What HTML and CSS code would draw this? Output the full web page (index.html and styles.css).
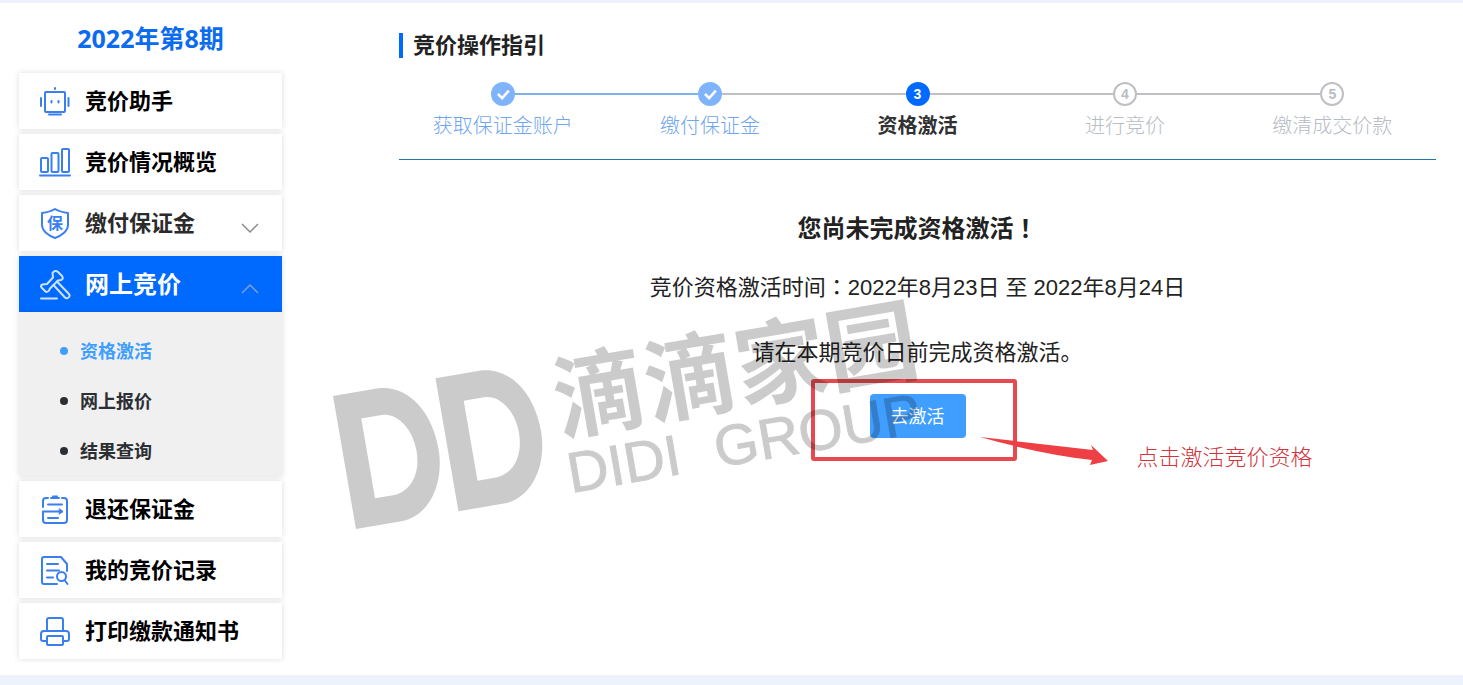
FILE: index.html
```html
<!DOCTYPE html>
<html lang="zh-CN">
<head>
	<meta charset="UTF-8">
	<title>网上竞价</title>
	<link rel="stylesheet" href="styles.css">
</head>
<body>
<div class="page">
	<aside class="sidebar">
		<h1>2022年第8期</h1>
		<nav class="menu">
			<a class="item" href="#">
				<svg class="icon" viewBox="0 0 32 32"><rect x="6" y="7" width="20" height="20" rx="1"/><path d="M10 29.500H22M2 13V21M29.500 13V21M16 3V4M12.500 16V17.500M19.500 16V17.500"/></svg>
				<span>竞价助手</span>
			</a>
			<a class="item" href="#">
				<svg class="icon" viewBox="0 0 32 32"><rect x="2" y="12" width="7" height="14" rx="1"/><rect x="12.500" y="7" width="7" height="19" rx="1"/><rect x="23" y="3" width="7" height="23" rx="1"/><path d="M1 29.500H31"/></svg>
				<span>竞价情况概览</span>
			</a>
			<button type="button" class="item parent">
				<svg class="icon" viewBox="0 0 32 32"><path d="M16 2Q21 5 29 6V18C29 24 22 29 16 31C10 29 3 24 3 18V6Q11 5 16 2Z"/><text x="16" y="22" class="shield_text">保</text></svg>
				<span>缴付保证金</span>
				<svg class="arrow" viewBox="0 0 20 32"><path d="M2 17L10 25L18 17"/></svg>
			</button>
			<button type="button" class="item parent active">
				<svg class="icon" viewBox="0 0 32 32"><path d="M13.500 5Q16 1.500 19 4L23 8Q25 11 22 12L19 12.500L11 20.500L10 22.500Q8 25 6 23L2.500 19.500Q1 17.500 3.500 16.500L8 16L14 9.500Z"/><path d="M14.500 17L25.500 29Q28 31.500 30 29Q31.500 27 29 25L18 13.500M2 30.500H18"/></svg>
				<span>网上竞价</span>
				<svg class="arrow" viewBox="0 0 20 32"><path d="M2 25L10 17L18 25"/></svg>
			</button>
			<ul class="submenu">
				<li class="current"><a href="#">资格激活</a></li>
				<li><a href="#">网上报价</a></li>
				<li><a href="#">结果查询</a></li>
			</ul>
			<a class="item" href="#">
				<svg class="icon" viewBox="0 0 32 32"><path d="M4 14V8Q4 5 7 5H9M12 5H20M14 3.500H18M23 5H25Q28 5 28 8V27Q28 30 25 30H7Q4 30 4 27V18.500H23M9 11.500H23M9 25H19"/><path class="solid" d="M20.500 16L24 18.500L20.500 21Z"/></svg>
				<span>退还保证金</span>
			</a>
			<a class="item" href="#">
				<svg class="icon" viewBox="0 0 32 32"><path d="M28 17V10L22 3H5Q3 3 3 5V28Q3 30 5 30H18M8 10H19M8 16.500H20M8 23.500H14M25.500 26L28.500 30"/><circle cx="22.500" cy="22.500" r="4.500"/></svg>
				<span>我的竞价记录</span>
			</a>
			<a class="item" href="#">
				<svg class="icon" viewBox="0 0 32 32"><path d="M8 16V5Q8 3 10 3H22Q24 3 24 5V16M8 26H4Q2 26 2 24V19Q2 16 5 16H27Q30 16 30 19V24Q30 26 28 26H24"/><rect x="8" y="21" width="16" height="9" rx="1"/></svg>
				<span>打印缴款通知书</span>
			</a>
		</nav>
	</aside>

	<main class="content">
		<h2>竞价操作指引</h2>
		<ol class="steps">
			<li class="done">
				<div class="head"><span class="circle"><svg viewBox="0 0 24 24"><path d="M6 12L11 17L19 8"/></svg></span></div>
				<div class="label">获取保证金账户</div>
			</li>
			<li class="done">
				<div class="head"><span class="circle"><svg viewBox="0 0 24 24"><path d="M6 12L11 17L19 8"/></svg></span></div>
				<div class="label">缴付保证金</div>
			</li>
			<li class="now">
				<div class="head"><span class="circle">3</span></div>
				<div class="label">资格激活</div>
			</li>
			<li>
				<div class="head"><span class="circle">4</span></div>
				<div class="label">进行竞价</div>
			</li>
			<li>
				<div class="head"><span class="circle">5</span></div>
				<div class="label">缴清成交价款</div>
			</li>
		</ol>

		<section class="notice">
			<h3>您尚未完成资格激活<span class="punct" lang="zh-TW">！</span></h3>
			<p class="time">竞价资格激活时间<span class="punct" lang="zh-TW">：</span>2022年8月23日 至 2022年8月24日</p>
			<p class="tip">请在本期竞价日前完成资格激活。</p>
			<div class="action">
				<button type="button" class="go">去激活</button>
				<svg class="mark" viewBox="0 0 300 84">
					<rect x="3" y="3" width="202" height="78" rx="1"/>
					<path d="M170 59L283 72L281 67L298 83L280 87L282 82Q230 76 170 59Z"/>
				</svg>
				<span class="mark_text">点击激活竞价资格</span>
			</div>
			<svg class="watermark" viewBox="0 0 610 250">
				<g transform="translate(3 101) rotate(-9.800)">
					<path id="logo_half" d="M0 0H46C76 2 95 32 95 70C95 104 75 135 46 135H0ZM24 27V108H44C60 107 73 92 73 68C73 46 61 28 46 27Z"/>
					<use href="#logo_half" x="104"/>
					<text x="217" y="76" class="wm_cn">滴滴家园</text>
					<text x="218" y="136" class="wm_en">DIDI</text>
					<text x="367" y="136" class="wm_en">GROUP</text>
				</g>
			</svg>
		</section>
	</main>
</div>
</body>
</html>
```
FILE: styles.css
```css
body {
	margin: 0;
	background-color: #eef2fc;
	font-family: "Liberation Sans", "Noto Sans CJK SC", sans-serif;
	color: #222;
}
.page {
	display: flex;
	margin: 3px 0 10px;
	padding: 18px 27px 16px 19px;
	gap: 117px;
	background-color: #fff;
}

/* left menu */
.sidebar {
	flex: 0 0 263px;
}
h1 {
	margin: 0 0 18px;
	font-family: "Noto Sans", "Noto Sans CJK SC", sans-serif;
	font-size: 25px;
	line-height: 34px;
	text-align: center;
	color: #0c6cf0;
}
.menu {
	display: flex;
	flex-direction: column;
	gap: 5px;
}
.item {
	display: flex;
	align-items: center;
	gap: 14px;
	box-sizing: border-box;
	width: 100%;
	height: 56px;
	padding: 0 22px 0 20px;
	border: 0;
	background-color: #fff;
	box-shadow: 0 0 6px rgba(0, 0, 0, 0.14);
	font-family: inherit;
	font-size: 22px;
	font-weight: bold;
	line-height: 30px;
	color: #000;
	text-decoration: none;
}
.item span {
	padding-top: 2px;
}
.parent {
	color: #2b2b2b;
	cursor: pointer;
}
.active {
	background-color: #006aff;
	font-size: 24px;
	color: #fff;
}
.icon {
	width: 32px;
	height: 32px;
	fill: none;
	stroke: #3a7ff0;
	stroke-width: 2;
	stroke-linecap: round;
	stroke-linejoin: round;
}
.icon .solid {
	fill: #3a7ff0;
	stroke-width: 1;
}
.active .icon {
	stroke: #cfe2ff;
}
.shield_text {
	font-size: 16px;
	font-weight: bold;
	text-anchor: middle;
	fill: #3a7ff0;
	stroke: none;
}
.arrow {
	width: 20px;
	height: 32px;
	margin-left: auto;
	fill: none;
	stroke: #8c8c8c;
	stroke-width: 1.5;
}
.active .arrow {
	stroke: #7f9fd0;
}
.submenu {
	margin: -5px 0 0;
	padding: 14px 0 0;
	list-style: none;
	background-color: #f0f0f0;
	box-shadow: 0 0 6px rgba(0, 0, 0, 0.14);
}
.submenu li {
	display: flex;
	align-items: center;
	height: 50px;
	padding-left: 41px;
	gap: 12px;
	color: #2b2f33;
}
.submenu li::before {
	content: "";
	width: 8px;
	height: 8px;
	border-radius: 50%;
	background-color: currentColor;
}
.submenu a {
	padding-top: 2px;
	font-size: 18px;
	font-weight: bold;
	line-height: 30px;
	color: inherit;
	text-decoration: none;
}
.submenu .current {
	color: #409eff;
}

/* right side */
.content {
	flex: 1;
	padding-top: 12px;
}
h2 {
	margin: 0 0 24px;
	padding-left: 10px;
	border-left: 4px solid #006aff;
	font-size: 22px;
	line-height: 25px;
}
.steps {
	display: flex;
	margin: 0;
	padding: 0 0 13px;
	list-style: none;
	border-bottom: 1px solid #1f78a8;
	color: #b8bcc4;
}
.steps li {
	flex: 1;
}
.head {
	display: flex;
	align-items: center;
}
.head::before,
.head::after {
	content: "";
	flex: 1;
	height: 2px;
	background-color: #c0c0c4;
}
.steps li:first-child .head::after,
.steps li:nth-child(2) .head::before {
	background-color: #7db2ea;
}
.steps li:first-child .head::before,
.steps li:last-child .head::after {
	background-color: transparent;
}
.circle {
	box-sizing: border-box;
	width: 24px;
	height: 24px;
	border: 2px solid #c0c0c4;
	border-radius: 50%;
	font-size: 14px;
	font-weight: bold;
	line-height: 20px;
	text-align: center;
}
.circle svg {
	display: block;
	width: 20px;
	height: 20px;
	fill: none;
	stroke: #fff;
	stroke-width: 3;
}
.label {
	font-size: 20px;
	font-weight: 300;
	line-height: 40px;
	text-align: center;
}
.done {
	color: #70a6ee;
}
.done .circle {
	border-color: #7fb4fc;
	background-color: #7fb4fc;
}
.now .circle {
	border-color: #006aff;
	background-color: #006aff;
	color: #fff;
}
.now .label {
	font-weight: bold;
	color: #303133;
}

.notice {
	position: relative;
	padding-top: 54px;
	font-size: 22px;
	line-height: 30px;
	text-align: center;
}
/* full-width marks sit in the middle of their cell */
.punct {
	font-family: "Noto Sans CJK TC", sans-serif;
	line-height: 1;
}
h3 {
	margin: 0 0 29px;
	font-size: 24px;
}
.time {
	margin: 0 0 35px;
}
.tip {
	margin: 0 0 26px;
}
.action {
	position: relative;
	width: 96px;
	margin: 0 auto;
}
.go {
	display: block;
	width: 100%;
	height: 44px;
	padding: 0 0 2px;
	border: 0;
	border-radius: 4px;
	background-color: #409eff;
	font-family: inherit;
	font-size: 18px;
	color: #fff;
	cursor: pointer;
}
.mark {
	position: absolute;
	top: -16px;
	left: -60px;
	width: 300px;
	height: 84px;
	overflow: visible;
	fill: #ee4044;
	pointer-events: none;
}
.mark rect {
	fill: none;
	stroke: #e64a50;
	stroke-width: 4;
}
.mark_text {
	position: absolute;
	top: 49px;
	left: 267px;
	font-weight: 300;
	white-space: nowrap;
	color: #d0343c;
}
.watermark {
	position: absolute;
	top: 135px;
	left: calc(50% - 588px);
	width: 610px;
	height: 250px;
	overflow: visible;
	opacity: 0.2;
	pointer-events: none;
}
.wm_cn {
	font-size: 92px;
	font-weight: bold;
}
.wm_en {
	font-size: 57px;
	stroke: #000;
	stroke-width: 1;
}
```
